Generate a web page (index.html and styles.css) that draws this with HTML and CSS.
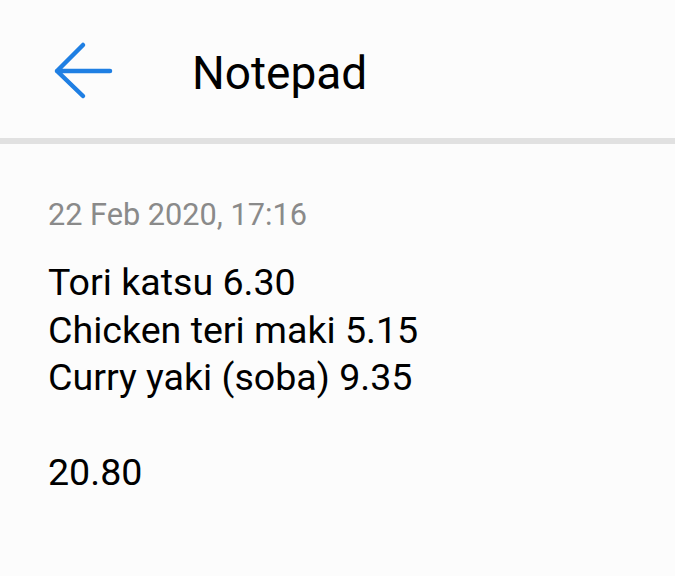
FILE: index.html
```html
<!DOCTYPE html>
<html lang="en">
<head>
<meta charset="UTF-8">
<meta name="viewport" content="width=device-width, initial-scale=1.0">
<title>Notepad</title>
<link rel="stylesheet" href="styles.css">
</head>
<body>

<div class="header">
  <svg class="back" width="64" height="60" viewBox="0 0 64 60">
    <path d="M31 4 L5 30 L31 55 M5 30 H58" fill="none" stroke="#1f7fe3" stroke-width="4.5" stroke-linecap="round" stroke-linejoin="round"/>
  </svg>
  <h1>Notepad</h1>
</div>
<div class="divider"></div>

<div class="note">
  <div class="date">22 Feb 2020, 17:16</div>
  <div class="text">
    <div>Tori katsu 6.30</div>
    <div>Chicken teri maki 5.15</div>
    <div>Curry yaki (soba) 9.35</div>
    <div>&nbsp;</div>
    <div>20.80</div>
  </div>
</div>

</body>
</html>
```

FILE: styles.css
```css
body {
  font-family: Roboto, 'Noto Sans', sans-serif;
  background-color: #fcfcfc;
  color: #000;
  margin: 0;
  padding: 0;
}
.header {
  height: 130px;
  padding-top: 8px;
  display: flex;
  align-items: center;
  background-color: #fcfcfc;
}
.back {
  margin-left: 52px;
  margin-top: -4px;
  flex-shrink: 0;
}
h1 {
  margin: 0 0 0 76px;
  font-size: 46px;
  font-weight: 400;
  line-height: 1;
}
.divider {
  height: 6px;
  background-color: #e1e1e1;
}
.note {
  padding: 53px 20px 0 48px;
}
.date {
  font-size: 30.7px;
  line-height: 36px;
  color: #8a8a8a;
}
.text {
  margin-top: 26px;
  font-size: 37.6px;
  line-height: 47.5px;
}
```
